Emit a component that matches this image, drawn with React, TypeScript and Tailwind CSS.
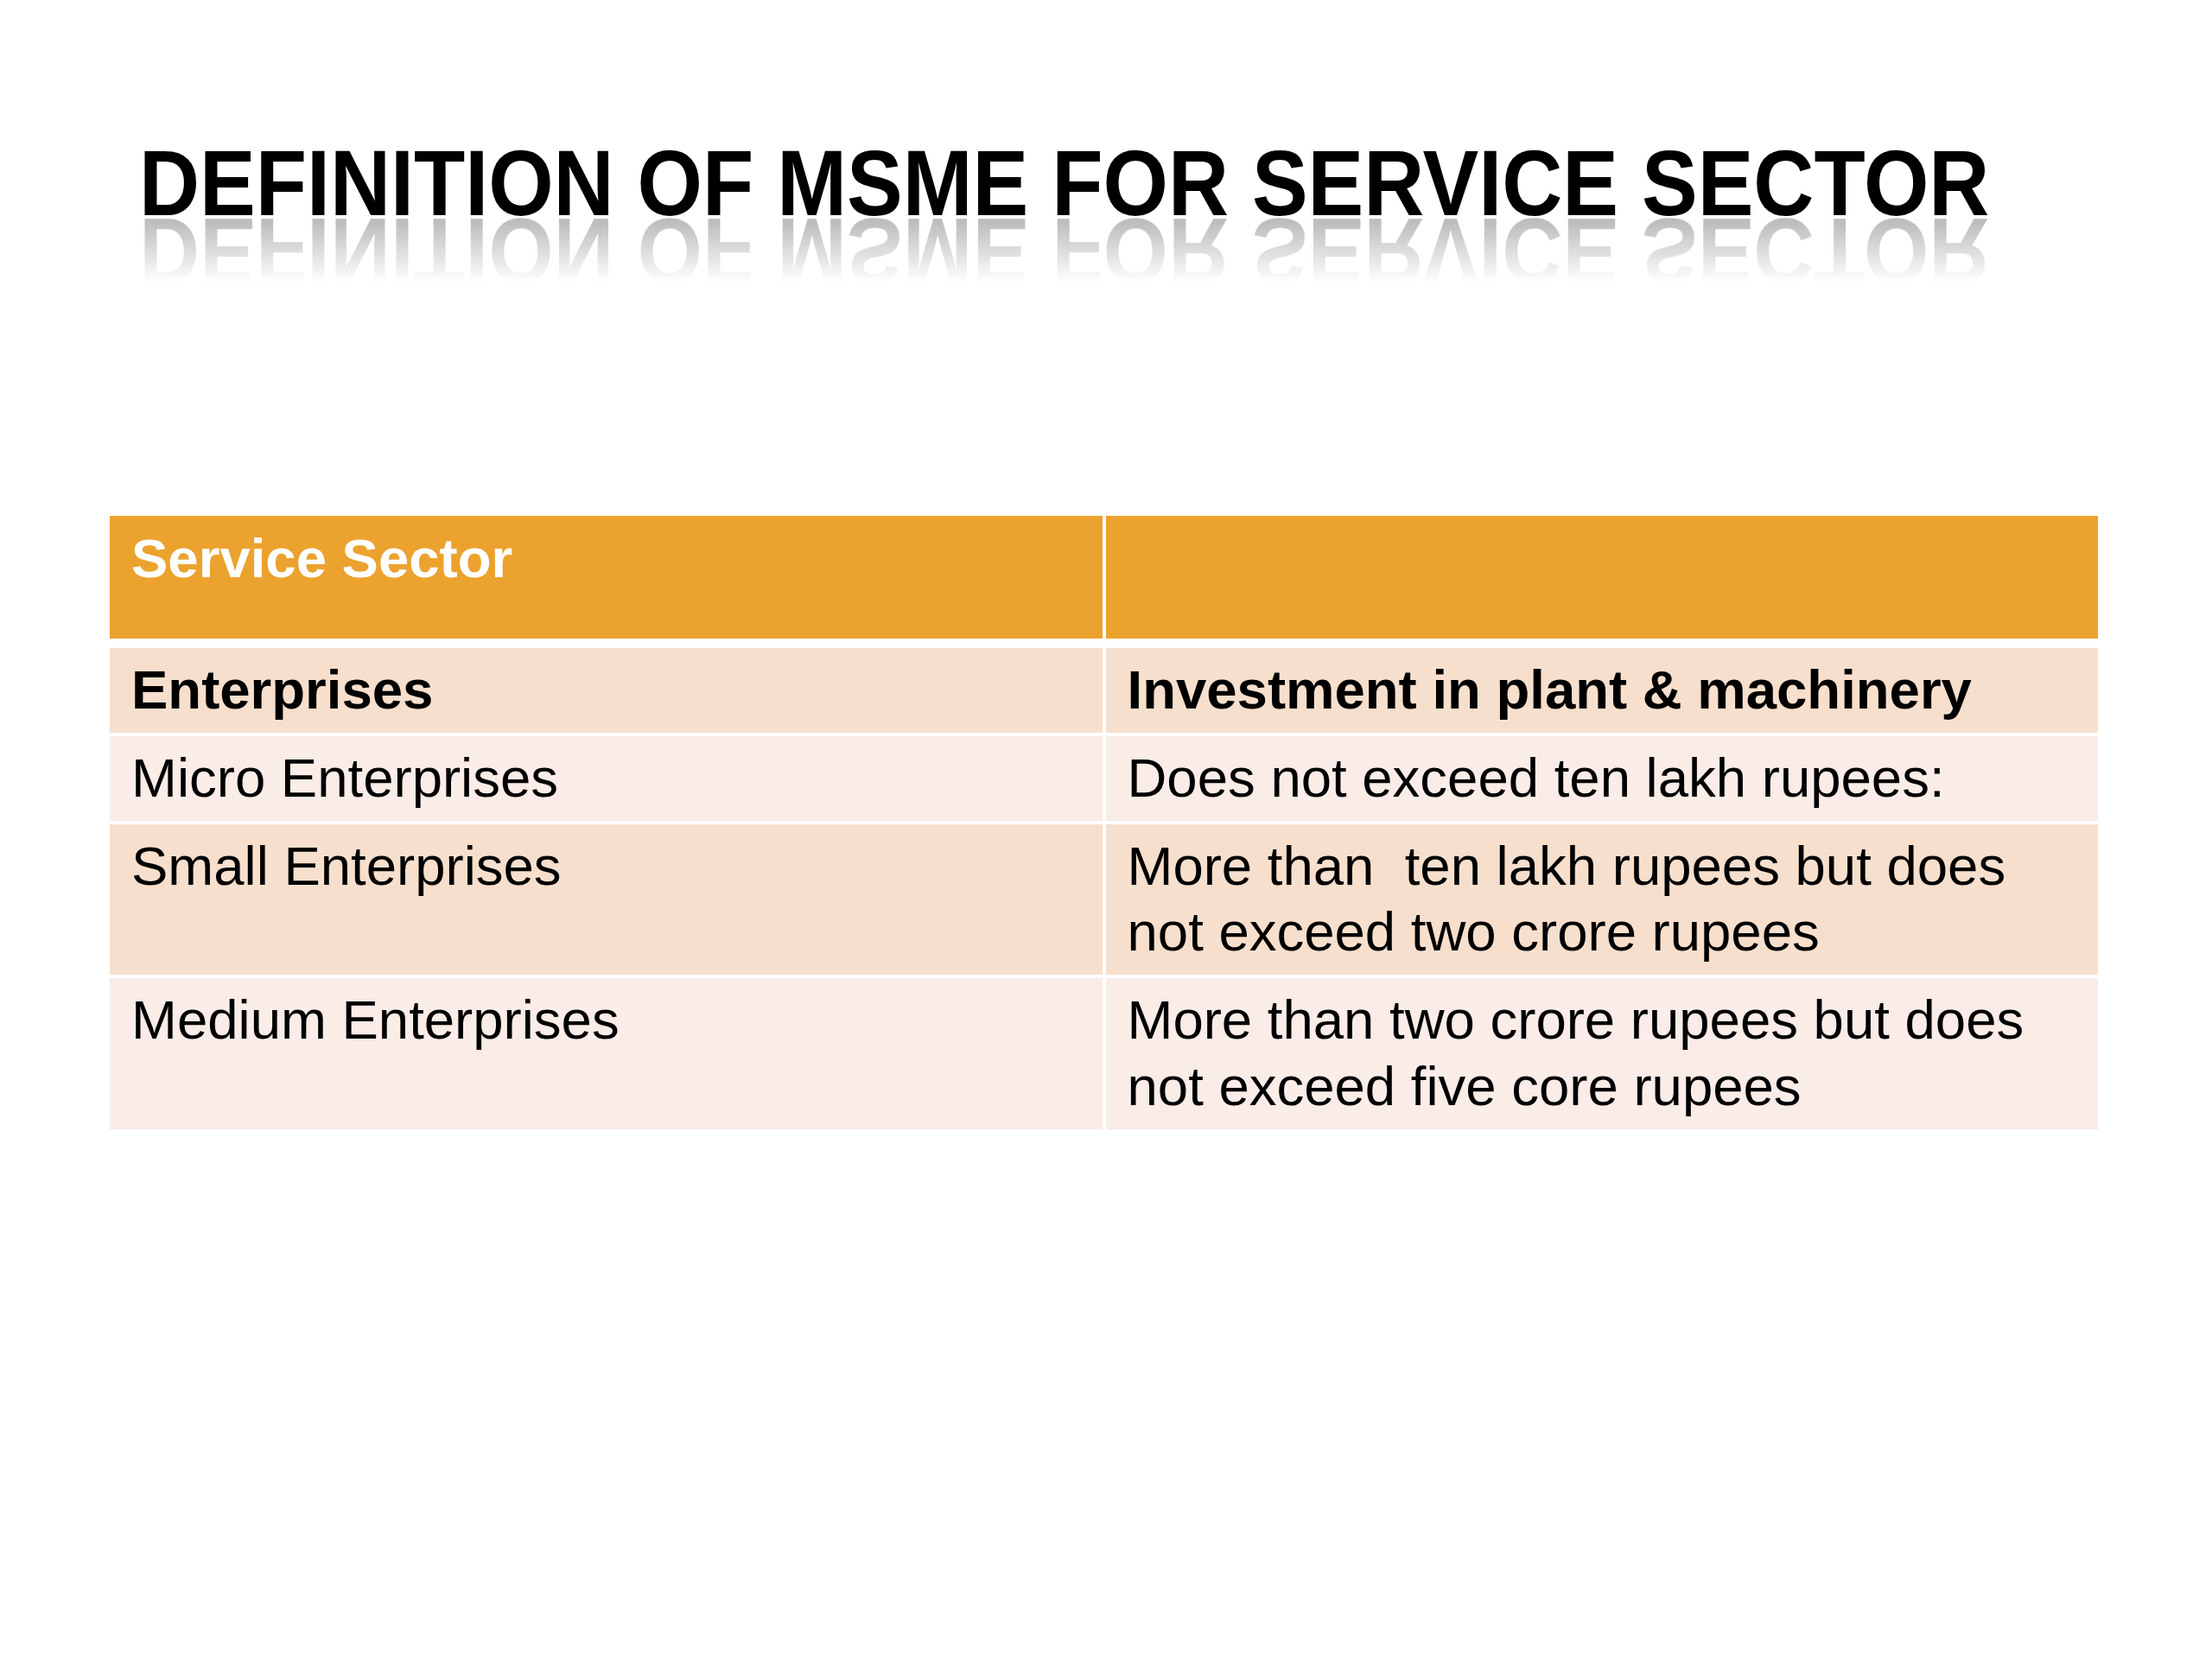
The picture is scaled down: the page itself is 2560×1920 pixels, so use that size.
const ROWS = [
  { left: "Micro Enterprises", right: "Does not exceed ten lakh rupees:", tone: "light" },
  { left: "Small Enterprises", right: "More than\u00a0 ten lakh rupees but does not exceed two crore rupees", tone: "dark" },
  { left: "Medium Enterprises", right: "More than two crore rupees but does not exceed five core rupees", tone: "light" },
];

export default function App() {
  return (
    <div className="min-h-[1920px] w-[2560px] bg-white font-['Liberation_Sans',Arial,sans-serif] text-black">
      {/* Title with mirrored reflection */}
      <div className="pt-[182px] pl-[161px]">
        <h1 className="origin-bottom scale-y-110 text-[97px] font-bold leading-[0.7] whitespace-nowrap [-webkit-box-reflect:below_2px_linear-gradient(transparent,rgba(255,255,255,0.28))]">
          DEFINITION OF MSME FOR SERVICE SECTOR
        </h1>
      </div>

      {/* Table */}
      <div className="ml-[127px] mt-[347px] w-[2301px] text-[63.5px] leading-[1.21]">
        <div className="grid h-[142px] grid-cols-2 gap-x-[4px]">
          <div className="bg-[#eca22e] px-[25px] pt-[11px] font-bold text-white">Service Sector</div>
          <div className="bg-[#eca22e]" />
        </div>

        <div className="mt-[11px] flex flex-col gap-y-[4px]">
          <div className="grid grid-cols-2 gap-x-[4px]">
            <div className="bg-[#f7dfcd] px-[25px] pt-[10px] pb-[11px] font-bold">Enterprises</div>
            <div className="bg-[#f7dfcd] px-[25px] pt-[10px] pb-[11px] font-bold">Investment in plant &amp; machinery</div>
          </div>
          {ROWS.map((row) => (
            <div key={row.left} className="grid grid-cols-2 gap-x-[4px]">
              <div className={(row.tone === "dark" ? "bg-[#f7dfcd]" : "bg-[#faece7]") + " px-[25px] pt-[10px] pb-[11px]"}>
                {row.left}
              </div>
              <div className={(row.tone === "dark" ? "bg-[#f7dfcd]" : "bg-[#faece7]") + " px-[25px] pt-[10px] pb-[11px]"}>
                {row.right}
              </div>
            </div>
          ))}
        </div>
      </div>
    </div>
  );
}
